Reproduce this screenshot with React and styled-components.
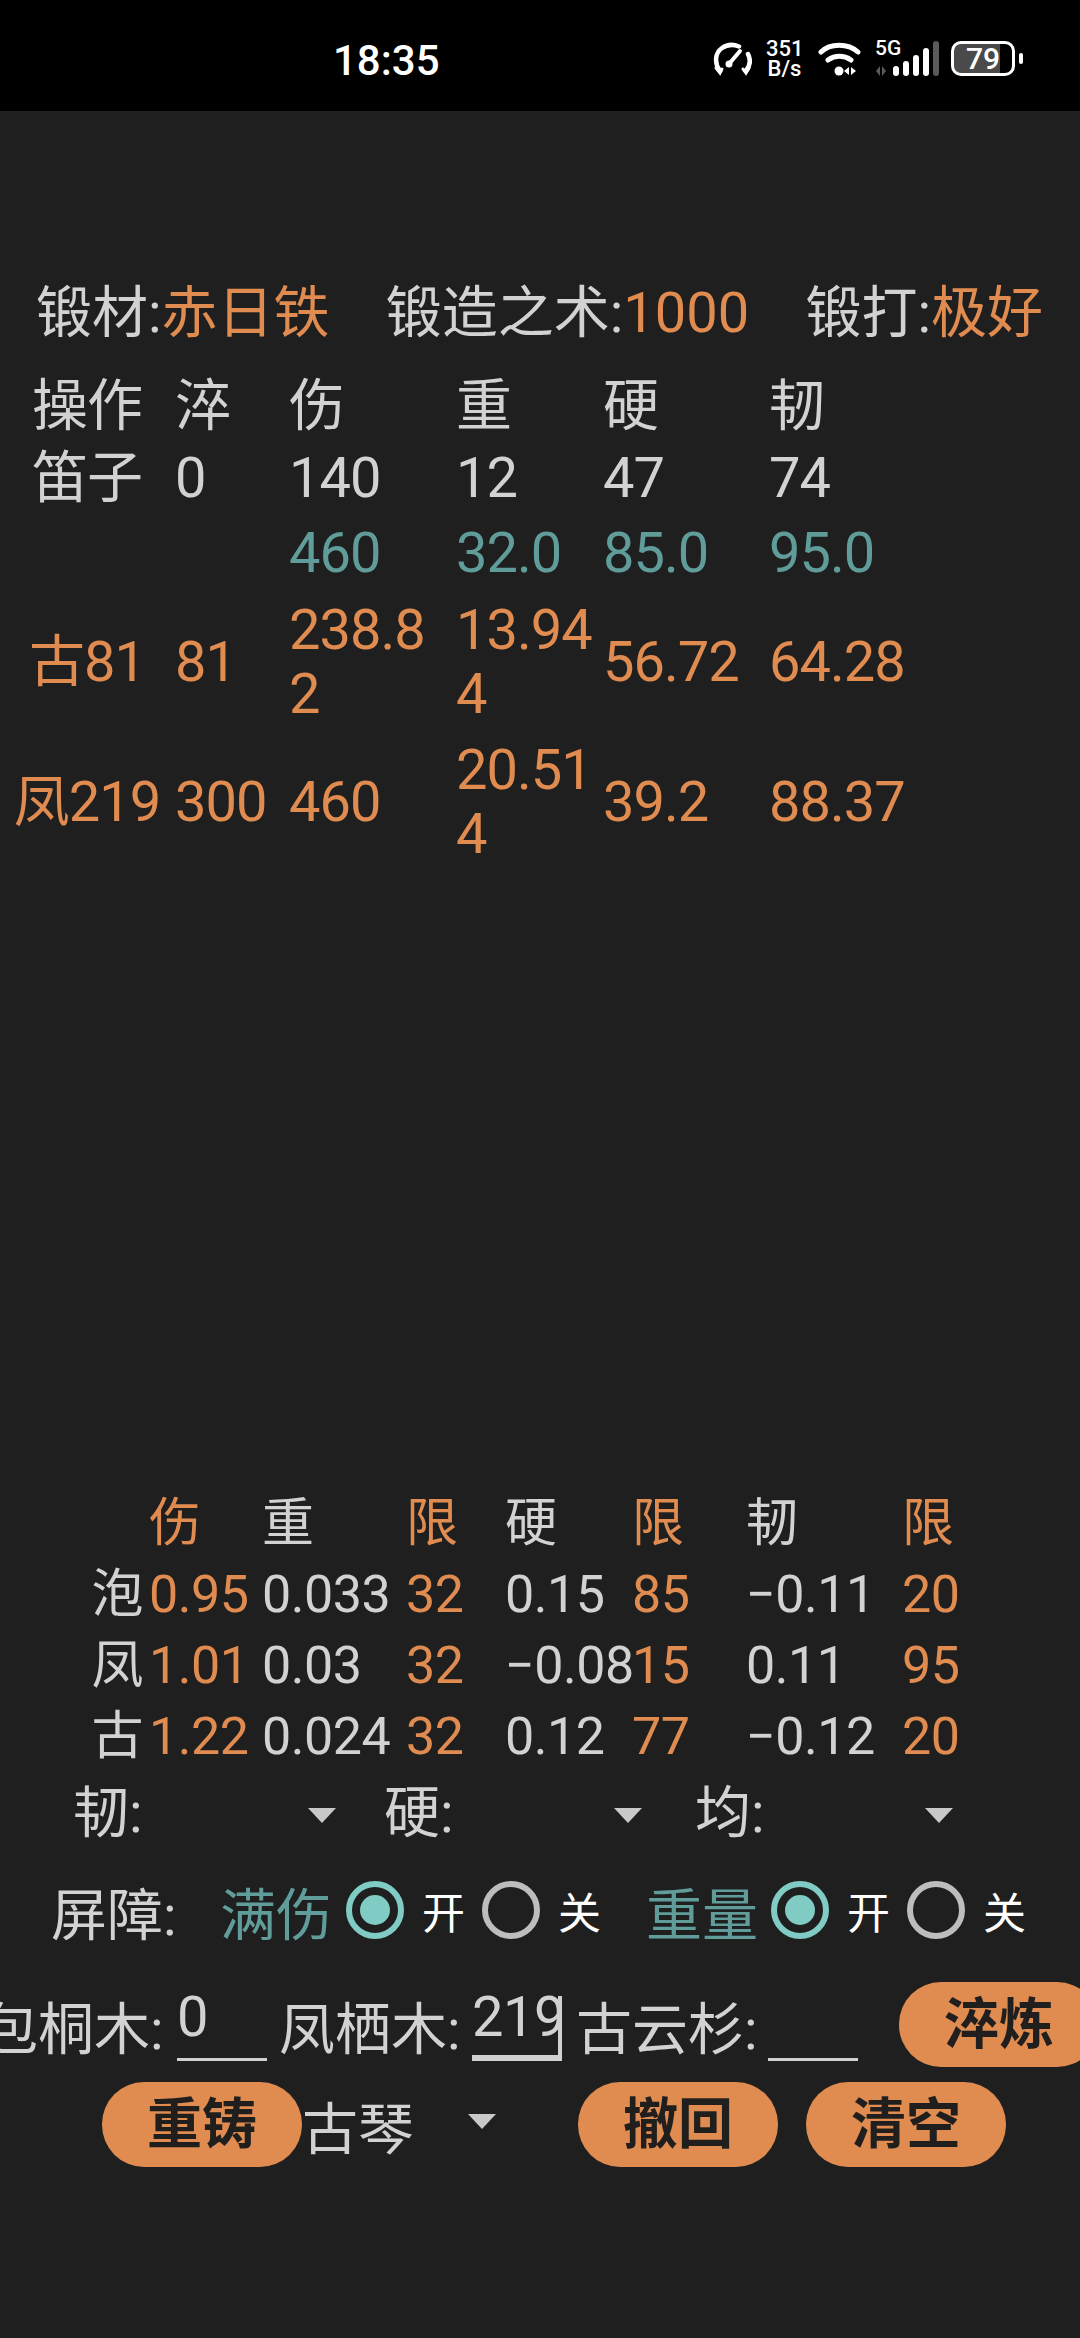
import React from "react";
import styled, { createGlobalStyle } from "styled-components";

const TEXT = "#d2d2d2";
const ORANGE = "#e08b50";
const TEAL = "#5f9c9a";

const GlobalStyle = createGlobalStyle`
  html, body {
    margin: 0;
    padding: 0;
    background: #1f1f1f;
  }
  body {
    font-family: Roboto, "Noto Sans CJK SC", sans-serif;
    color: ${TEXT};
  }
`;

const Page = styled.div`
  width: 1080px;
  height: 2338px;
  overflow: hidden;
  display: flex;
  flex-direction: column;
  background: #1f1f1f;
`;

const StatusBar = styled.div`
  height: 111px;
  flex: none;
  background: #000;
  display: flex;
  align-items: center;
  padding-left: 333px;
  box-sizing: border-box;
  color: #fff;
`;
const Time = styled.div`
  font-size: 42px;
  font-weight: 500;
  width: 104px;
  line-height: 32px;
  margin-top: 10px;
  white-space: nowrap;
`;
const StatusIcons = styled.div`
  margin-left: 276px;
  margin-top: 6px;
  display: flex;
  align-items: center;
  height: 40px;
`;
const Speed = styled.div`
  font-size: 22px;
  font-weight: 500;
  line-height: 20px;
  text-align: center;
  width: 37px;
  margin: 0 15px 0 14px;
`;
const Net = styled.div`
  width: 79px;
  height: 36px;
  margin-left: 13px;
  position: relative;
`;
const NetLabel = styled.span`
  position: absolute;
  left: 0;
  top: -2px;
  font-size: 21px;
  font-weight: 500;
  line-height: 18px;
`;
const Battery = styled.div`
  width: 64px;
  height: 35px;
  margin-left: -3px;
  box-sizing: border-box;
  border: 3px solid #fff;
  border-radius: 10px;
  background: linear-gradient(to right, #4a4a4a 80%, transparent 80%);
  display: flex;
  align-items: center;
  justify-content: center;
  font-size: 30px;
  font-weight: 500;
`;
const BatteryNub = styled.div`
  width: 4px;
  height: 11px;
  margin-left: 4px;
  border-radius: 2px;
  background: #fff;
`;

const InfoBar = styled.div`
  display: flex;
  justify-content: space-between;
  font-size: 56px;
  line-height: 72px;
  padding: 166px 37px 0 36px;
  white-space: nowrap;
`;
const Info = styled.div``;
const Hot = styled.span`
  color: ${ORANGE};
`;

const TopTable = styled.div`
  margin-top: 21px;
  font-size: 56px;
  letter-spacing: -1px;
  line-height: 64px;
`;
const TopRow = styled.div`
  display: grid;
  grid-template-columns: 175px 114px 167px 147px 166px 200px;
  align-items: center;
  min-height: ${(p) => p.$h}px;
  color: ${(p) => p.$color || TEXT};
`;
const Cell = styled.div`
  padding-right: 6px;
  word-break: break-all;
`;
const NameCell = styled.div`
  width: 174px;
  text-align: center;
  white-space: nowrap;
`;

const Spacer = styled.div`
  flex: 1;
`;

const BottomTable = styled.div`
  font-size: 52px;
  letter-spacing: -0.5px;
  line-height: 71px;
`;
const BottomRow = styled.div`
  display: grid;
  grid-template-columns: 149px 113px 144px 99px 127px 114px 156px 100px;
  white-space: nowrap;
`;
const RowName = styled.div`
  text-align: right;
  padding-right: 6px;
`;
const Val = styled.div`
  color: ${(p) => (p.$hot ? ORANGE : TEXT)};
`;

const SelectRow = styled.div`
  display: flex;
  padding-left: 73px;
  margin-top: 6px;
  font-size: 56px;
  line-height: 70px;
`;
const SelectBox = styled.div`
  width: ${(p) => p.$w || 311}px;
  flex: none;
  position: relative;
`;
const Arrow = styled.i`
  position: absolute;
  left: ${(p) => p.$left}px;
  top: 30px;
  width: 0;
  height: 0;
  border-left: 14px solid transparent;
  border-right: 14px solid transparent;
  border-top: 15px solid #c9c9c9;
`;

const RadioRow = styled.div`
  display: flex;
  align-items: center;
  padding-left: 51px;
  margin-top: 32px;
  height: 60px;
  white-space: nowrap;
`;
const RadioLabel = styled.span`
  font-size: 56px;
  width: ${(p) => p.$w}px;
  flex: none;
  color: ${(p) => p.$color || TEXT};
`;
const Radio = styled.span`
  width: 58px;
  height: 58px;
  flex: none;
  box-sizing: border-box;
  border-radius: 50%;
  border: 6px solid ${(p) => (p.$on ? "#80cbc4" : "#bdbdbd")};
  display: flex;
  align-items: center;
  justify-content: center;
  &::after {
    content: "";
    width: 30px;
    height: 30px;
    border-radius: 50%;
    background: ${(p) => (p.$on ? "#80cbc4" : "transparent")};
  }
`;
const RadioText = styled.span`
  font-size: 43px;
  color: #fff;
  margin-left: 18px;
  width: ${(p) => p.$w}px;
  flex: none;
`;

const InputRow = styled.div`
  display: flex;
  align-items: center;
  margin-top: 42px;
  margin-left: -18px;
  height: 85px;
  white-space: nowrap;
  font-size: 56px;
`;
const InputLabel = styled.span`
  flex: none;
  width: ${(p) => p.$w}px;
`;
const Field = styled.div`
  width: 90px;
  height: 60px;
  flex: none;
  margin-top: 12px;
  box-sizing: border-box;
  border-bottom: ${(p) => (p.$focus ? 6 : 3)}px solid #d0d0d0;
  line-height: 32px;
  position: relative;
  margin-right: ${(p) => p.$gap}px;
  font-size: 56px;
  letter-spacing: -0.5px;
`;
const Caret = styled.i`
  position: absolute;
  right: 0;
  top: -5px;
  width: 4px;
  height: 60px;
  background: #d0d0d0;
`;

const Pill = styled.div`
  width: 200px;
  height: 85px;
  flex: none;
  border-radius: 42px;
  background: ${ORANGE};
  color: #211f1d;
  font-size: 55px;
  font-weight: 700;
  line-height: 85px;
  text-align: center;
  margin-left: ${(p) => p.$ml || 0}px;
`;

const ActionRow = styled.div`
  display: flex;
  align-items: center;
  margin-top: 15px;
  padding: 0 0 171px 102px;
  font-size: 56px;
`;

const GaugeIcon = () => (
  <svg width="39" height="34" viewBox="0 0 39 34" fill="none" stroke="#fff" strokeWidth="4.5" strokeLinecap="round">
    <path d="M7 29C1 21 2 11 9 6c5-3.500 11-4 17-1.500" />
    <path d="M35 12c3 6 2 12-2 17" />
    <path d="M3 26l4 5 2-4M36 26l-3 5-3-4" strokeWidth="3" />
    <path d="M16 22L27 9" strokeWidth="4" />
    <circle cx="16" cy="22" r="3.500" fill="#fff" stroke="none" />
  </svg>
);

const WifiIcon = () => (
  <svg width="44" height="34" viewBox="0 0 44 34" fill="none" stroke="#fff" strokeWidth="5" strokeLinecap="round">
    <path d="M3 10C12 1 30 1 40 10" />
    <path d="M10 18c7-5 16-5 23 0" />
    <circle cx="21" cy="29" r="4.500" fill="#fff" stroke="none" />
    <path d="M26 29l5-4v8zM33 25l5 4-5 4z" fill="#fff" stroke="none" />
  </svg>
);

const SignalIcon = () => (
  <svg width="79" height="36" viewBox="0 0 79 36" fill="#fff">
    <path d="M1 30l4-5v10zM7 35V25l4 5z" fill="#5a5a5a" />
    <rect x="18" y="25" width="6" height="10" rx="3" />
    <rect x="28" y="20" width="6" height="15" rx="3" />
    <rect x="38" y="14" width="6" height="21" rx="3" />
    <rect x="48" y="7" width="6" height="28" rx="3" />
    <rect x="58" y="0" width="6" height="35" rx="3" fill="#5a5a5a" />
  </svg>
);

export default function App() {
  return (
    <Page>
      <GlobalStyle />
      <StatusBar>
        <Time>18:35</Time>
        <StatusIcons>
          <GaugeIcon />
          <Speed>351<br />B/s</Speed>
          <WifiIcon />
          <Net>
            <NetLabel>5G</NetLabel>
            <SignalIcon />
          </Net>
          <Battery>79</Battery>
          <BatteryNub />
        </StatusIcons>
      </StatusBar>

      <InfoBar>
        <Info>锻材:<Hot>赤日铁</Hot></Info>
        <Info>锻造之术:<Hot>1000</Hot></Info>
        <Info>锻打:<Hot>极好</Hot></Info>
      </InfoBar>

      <TopTable>
        <TopRow $h={72}>
          <NameCell>操作</NameCell><Cell>淬</Cell><Cell>伤</Cell><Cell>重</Cell><Cell>硬</Cell><Cell>韧</Cell>
        </TopRow>
        <TopRow $h={72}>
          <NameCell>笛子</NameCell><Cell>0</Cell><Cell>140</Cell><Cell>12</Cell><Cell>47</Cell><Cell>74</Cell>
        </TopRow>
        <TopRow $h={78} $color={TEAL}>
          <NameCell /><Cell /><Cell>460</Cell><Cell>32.0</Cell><Cell>85.0</Cell><Cell>95.0</Cell>
        </TopRow>
        <TopRow $h={140} $color={ORANGE}>
          <NameCell>古81</NameCell><Cell>81</Cell><Cell>238.82</Cell><Cell>13.944</Cell><Cell>56.72</Cell><Cell>64.28</Cell>
        </TopRow>
        <TopRow $h={140} $color={ORANGE}>
          <NameCell>凤219</NameCell><Cell>300</Cell><Cell>460</Cell><Cell>20.514</Cell><Cell>39.2</Cell><Cell>88.37</Cell>
        </TopRow>
      </TopTable>

      <Spacer />

      <BottomTable>
        <BottomRow>
          <RowName />
          <Val $hot>伤</Val><Val>重</Val><Val $hot>限</Val><Val>硬</Val><Val $hot>限</Val><Val>韧</Val><Val $hot>限</Val>
        </BottomRow>
        <BottomRow>
          <RowName>泡</RowName>
          <Val $hot>0.95</Val><Val>0.033</Val><Val $hot>32</Val><Val>0.15</Val><Val $hot>85</Val><Val>−0.11</Val><Val $hot>20</Val>
        </BottomRow>
        <BottomRow>
          <RowName>凤</RowName>
          <Val $hot>1.01</Val><Val>0.03</Val><Val $hot>32</Val><Val>−0.08</Val><Val $hot>15</Val><Val>0.11</Val><Val $hot>95</Val>
        </BottomRow>
        <BottomRow>
          <RowName>古</RowName>
          <Val $hot>1.22</Val><Val>0.024</Val><Val $hot>32</Val><Val>0.12</Val><Val $hot>77</Val><Val>−0.12</Val><Val $hot>20</Val>
        </BottomRow>
      </BottomTable>

      <SelectRow>
        <SelectBox>韧:<Arrow $left={235} /></SelectBox>
        <SelectBox>硬:<Arrow $left={230} /></SelectBox>
        <SelectBox>均:<Arrow $left={230} /></SelectBox>
      </SelectRow>

      <RadioRow>
        <RadioLabel $w={169}>屏障:</RadioLabel>
        <RadioLabel $w={126} $color={TEAL}>满伤</RadioLabel>
        <Radio $on />
        <RadioText $w={60}>开</RadioText>
        <Radio />
        <RadioText $w={88}>关</RadioText>
        <RadioLabel $w={125} $color={TEAL}>重量</RadioLabel>
        <Radio $on />
        <RadioText $w={60}>开</RadioText>
        <Radio />
        <RadioText $w={60}>关</RadioText>
      </RadioRow>

      <InputRow>
        <InputLabel $w={195}>包桐木:</InputLabel>
        <Field $gap={12}>0</Field>
        <InputLabel $w={193}>凤栖木:</InputLabel>
        <Field $gap={14} $focus>219<Caret /></Field>
        <InputLabel $w={192}>古云杉:</InputLabel>
        <Field $gap={41} />
        <Pill>淬炼</Pill>
      </InputRow>

      <ActionRow>
        <Pill>重铸</Pill>
        <SelectBox $w={276}>古琴<Arrow $left={166} /></SelectBox>
        <Pill>撤回</Pill>
        <Pill $ml={28}>清空</Pill>
      </ActionRow>
    </Page>
  );
}
